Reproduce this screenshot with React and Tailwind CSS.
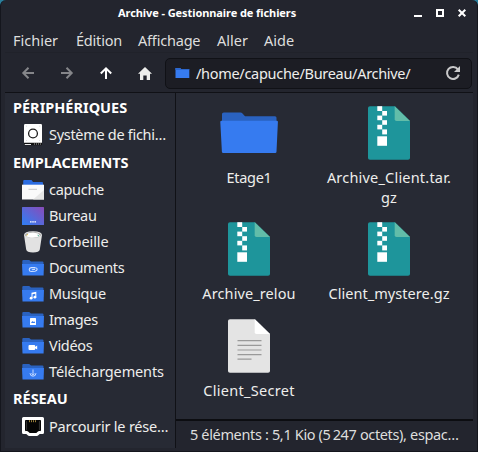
import React from "react";

function Folder({ kind }) {
  return (
    <svg width="22" height="22" viewBox="0 0 22 22" className="shrink-0">
      <path d="M0.3 5V4Q0.3 3 1.3 3H7.2L9 4.6H20.5Q21.5 4.6 21.5 5.6V8H0.3Z" fill="#2a62c0" />
      <path d="M0 7H22L21.6 18.4H0.5Z" fill="#367bf0" />
      {kind === "doc" && (
        <path d="M13 10.6H9.3Q7.2 10.9 7.2 12.8Q7.4 14.5 9.3 14.5L13 14.2Q15.2 13.7 15.2 12Q15 10.7 13 10.7M13 12.4L9.8 12.8" stroke="#cfe0ff" fill="none" strokeWidth="1.1" />
      )}
      {kind === "music" && (
        <g fill="#fff">
          <path d="M9.5 9.7L14.3 8.8V14H13.3V10.8L10.5 11.3V15.2H9.5Z" />
          <circle cx="9.1" cy="15.2" r="1.4" />
          <circle cx="12.9" cy="14.2" r="1.4" />
        </g>
      )}
      {kind === "image" && (
        <g>
          <rect x="8" y="9" width="6" height="7" rx="0.6" fill="#fff" />
          <path d="M9 14L10.4 12L11.3 13L12.2 12.3L13.2 14Z" fill="#367bf0" />
        </g>
      )}
      {kind === "video" && (
        <g fill="#fff">
          <rect x="6.5" y="10" width="6.7" height="5" rx="1" />
          <path d="M13 12L15.2 10.6V14.5L13 13.2Z" />
        </g>
      )}
      {kind === "down" && (
        <path d="M11 8.5V14M9.3 12.5L11 14.2L12.7 12.5M8 12.2Q8.2 15.2 11 15.2Q13.8 15.2 14 12.2" stroke="#c3d9ff" fill="none" strokeWidth="1" />
      )}
    </svg>
  );
}

function Disk() {
  return (
    <svg width="22" height="22" viewBox="0 0 22 22" className="shrink-0">
      <rect x="2" y="0" width="18" height="19.5" rx="1.2" fill="#fff" />
      <path d="M2 18.7H20V20.5Q20 21.3 19 21.3H3Q2 21.3 2 20.5Z" fill="#111" />
      <path d="M2.5 20H9V21H3Z" fill="#e8e8e8" />
      <path d="M12 20H13M14 20H15M16 20H17M18 20H19" stroke="#aaa" />
      <circle cx="11" cy="9.5" r="4.4" fill="#fff" stroke="#1c1c1c" strokeWidth="1.3" />
      <path d="M4 2.2h.8M17.3 2.2h.8M4 16.5h.8M17.3 16.5h.8" stroke="#ccc" strokeWidth="0.8" />
    </svg>
  );
}

function HomeFolder() {
  return (
    <svg width="22" height="22" viewBox="0 0 22 22" className="shrink-0">
      <path d="M1.2 6V2Q1.2 1 2.2 1H9.5L11 3H20Q21 3 21 4V6Z" fill="#2b6ce0" />
      <path d="M0 5.7H22V20.5H0Z" fill="#fafafa" />
      <path d="M22 11V20.5H11Z" fill="#e6e6e6" />
      <path d="M6.5 10.3H15" stroke="#c8c8c8" strokeWidth="1" />
    </svg>
  );
}

function Desktop() {
  return (
    <svg width="22" height="22" viewBox="0 0 22 22" className="shrink-0">
      <defs>
        <linearGradient id="desk" x1="0" y1="1" x2="1" y2="0">
          <stop offset="0.1" stopColor="#367bf0" />
          <stop offset="1" stopColor="#8a4bb8" />
        </linearGradient>
      </defs>
      <rect x="0" y="2" width="22" height="18" rx="0.5" fill="url(#desk)" />
      <path d="M8 16.8h1.6M10.2 16.8h1.6M12.4 16.8h1.6" stroke="#fff" strokeWidth="1.3" />
    </svg>
  );
}

function Trash() {
  return (
    <svg width="22" height="22" viewBox="0 0 22 22" className="shrink-0">
      <path d="M2 4Q2 0.2 11 0.2Q20 0.2 20 4L17.8 18.6Q17.4 21.6 11 21.6Q4.6 21.6 4.2 18.6Z" fill="#e2e2e2" />
      <ellipse cx="11" cy="4" rx="8" ry="2.9" fill="#aaa" />
      <path d="M4 5L6 2.3L11 1.5L16 2.5L18.2 5Q15 6.8 11 6.8Q6 6.8 4 5Z" fill="#fff" />
      <path d="M4.5 4.5L6 3.2" stroke="#e5c449" strokeWidth="1" />
      <path d="M15.6 4.2L17 5" stroke="#47ad91" strokeWidth="1" />
    </svg>
  );
}

function Ethernet() {
  return (
    <svg width="22" height="22" viewBox="0 0 22 22" className="shrink-0">
      <path d="M1.5 2.5H20.5V16.6H17L15 18.4H7L5 16.6H1.5Z" fill="#050505" stroke="#fff" strokeWidth="3" strokeLinejoin="round" />
      <path d="M3 4L4.6 5.7V13.6L3 15.1M19 4L17.4 5.7V13.6L19 15.1" stroke="#555" strokeWidth="0.6" fill="none" />
      <path d="M7.5 4.2V6.2M9.5 4.2V6.2M11.5 4.2V6.2M13.5 4.2V6.2" stroke="#a98b3f" strokeWidth="0.9" />
    </svg>
  );
}

function BigFolder() {
  return (
    <svg width="58" height="54" viewBox="0 0 58 54">
      <path d="M2 15V8Q2 6.5 3.8 6.5H20.5Q21.7 6.5 22.5 7.5L25 10.3H55Q56.5 10.3 56.5 11.8V18H2Z" fill="#2a62c0" />
      <path d="M0.3 16Q0.3 14.8 1.5 14.8H56.8Q58 14.8 57.9 16L56.5 45.8Q56.4 47 55.2 47H3.2Q2 47 1.9 45.8Z" fill="#367bf0" />
    </svg>
  );
}

function Archive() {
  return (
    <svg width="42" height="54" viewBox="0 0 42 54">
      <path d="M2 0.2H27L42 15V52Q42 53.8 40 53.8H2Q0 53.8 0 52V2Q0 0.2 2 0.2Z" fill="#1e959b" />
      <path d="M26.7 0.2L42 15H28.5Q26.7 15 26.7 13.2Z" fill="#62bda9" />
      <g fill="#fff">
        <rect x="9.3" y="0.2" width="4.9" height="4.8" />
        <rect x="14.2" y="5" width="4.8" height="4.6" />
        <rect x="9.3" y="9.6" width="4.9" height="4.6" />
        <rect x="14.2" y="14.2" width="4.8" height="4.6" />
        <rect x="9.3" y="18.8" width="4.9" height="4.6" />
        <rect x="14.2" y="23.4" width="4.8" height="5" />
        <rect x="9.3" y="30.3" width="9.7" height="9.5" />
      </g>
    </svg>
  );
}

function TextFile() {
  return (
    <svg width="42" height="54" viewBox="0 0 42 54">
      <path d="M2 0.2H27L42 15V52Q42 53.8 40 53.8H2Q0 53.8 0 52V2Q0 0.2 2 0.2Z" fill="#e4e4e4" />
      <path d="M26.7 0.2L42 15H28.5Q26.7 15 26.7 13.2Z" fill="#fff" />
      <path d="M9.5 21.6H33.5M9.5 26.3H33.5M9.5 31H33.5M9.5 35.6H33.5M9.5 40.2H23.5" stroke="#999" strokeWidth="1.2" />
    </svg>
  );
}

function Heading({ children, className = "h-[27px]" }) {
  return <div className={className + " flex items-center pl-2 text-[14.5px] font-bold text-white"}>{children}</div>;
}

function Place({ icon, children, className = "h-[26px] tracking-[-0.3px]" }) {
  return (
    <div className={className + " flex items-center gap-[5px] pl-[17px]"}>
      {icon}
      <span>{children}</span>
    </div>
  );
}

function Item({ icon, children, className = "" }) {
  return (
    <div className={className + " flex w-[140px] flex-col items-center"}>
      <div className="flex h-[54px] items-center">{icon}</div>
      <div className="mt-[7px] text-center leading-[20px]">{children}</div>
    </div>
  );
}

export default function App() {
  return (
    <div className="h-[452px] w-[478px] overflow-hidden bg-[#2a7f9c]">
      <div className="flex h-[452px] w-[478px] flex-col rounded-t-[6px] border-x border-b border-[#14161d] bg-[#23252e] px-[4px] pb-[3px] font-['Noto_Sans',sans-serif] text-[14.5px] whitespace-nowrap text-[#eeeeec]">
        <div className="flex h-[27px] items-center">
          <div className="ml-[113px] w-[290px] pb-[2px] text-[11px] leading-[24px] font-bold tracking-[-0.08px] text-white">Archive - Gestionnaire de fichiers</div>
          <svg width="54" height="12" viewBox="0 0 54 12" className="ml-[5px] mb-px">
            <path d="M1 9H9" stroke="#fff" strokeWidth="2" />
            <rect x="24" y="3" width="6" height="6" fill="none" stroke="#fff" strokeWidth="2" />
            <path d="M45.7 2.7L52.3 9.3M52.3 2.7L45.7 9.3" stroke="#fff" strokeWidth="2" />
          </svg>
        </div>
        <div className="flex h-[26px] items-center border-b border-[#20222a] pt-[3px] pl-2 text-[#dededd]">
          <span className="w-[63px]">Fichier</span>
          <span className="w-[62px] tracking-[-0.2px]">Édition</span>
          <span className="w-[79px] tracking-[-0.2px]">Affichage</span>
          <span className="w-[47px]">Aller</span>
          <span>Aide</span>
        </div>
        <div className="flex h-[39px] items-center">
          <svg width="160" height="30" viewBox="0 0 160 30" fill="none" className="shrink-0">
            <path d="M29 15H18.5M23.5 9.8L18.3 15L23.5 20.2" stroke="#85868a" strokeWidth="2" />
            <path d="M56 15H66.5M61.5 9.8L66.7 15L61.5 20.2" stroke="#85868a" strokeWidth="2" />
            <path d="M101 21V10.5M95.8 15.5L101 10.3L106.2 15.5" stroke="#fff" strokeWidth="2" />
            <path d="M140 9L147 15.8H145V22H141.7V17.5H138.3V22H135V15.8H133Z" fill="#eeeeec" />
          </svg>
          <div className="mt-px flex h-[31px] w-[307px] items-center rounded-[5px] border border-[#101116] bg-[#1c1d24] pr-[10px] pl-[9px]">
            <svg width="15" height="12" viewBox="0 0 15 12" className="shrink-0">
              <path d="M0.5 1H5L6.5 2.2H14.3V11H0.5Z" fill="#367bf0" />
              <path d="M0.5 1H5L6.5 2.2H14.3V3H0.5Z" fill="#2c68cf" />
            </svg>
            <span className="ml-[6px] flex-1 pt-px tracking-[-0.3px]">/home/capuche/Bureau/Archive/</span>
            <svg width="16" height="16" viewBox="0 0 16 16" fill="none" className="shrink-0">
              <path d="M12.9 4.4A6 6 0 1 0 13.8 9.6" stroke="#c9c9ca" strokeWidth="2" />
              <path d="M15 1V7H9Z" fill="#c9c9ca" />
            </svg>
          </div>
        </div>
        <div className="flex min-h-0 flex-1 border-t border-[#101116]">
          <div className="w-[171px] shrink-0 overflow-hidden border-r border-[#101116] bg-[#272a34] pt-px">
            <Heading>PÉRIPHÉRIQUES</Heading>
            <Place className="h-[28px] tracking-[-0.3px]" icon={<Disk />}>Système de fichi…</Place>
            <Heading className="h-[28px] tracking-[-0.05px]">EMPLACEMENTS</Heading>
            <Place icon={<HomeFolder />}>capuche</Place>
            <Place icon={<Desktop />}>Bureau</Place>
            <Place className="h-[26px] tracking-[-0.1px]" icon={<Trash />}>Corbeille</Place>
            <Place icon={<Folder kind="doc" />}>Documents</Place>
            <Place icon={<Folder kind="music" />}>Musique</Place>
            <Place icon={<Folder kind="image" />}>Images</Place>
            <Place icon={<Folder kind="video" />}>Vidéos</Place>
            <Place className="h-[26px] tracking-[-0.15px]" icon={<Folder kind="down" />}>Téléchargements</Place>
            <Heading className="h-[28px]">RÉSEAU</Heading>
            <Place className="h-[28px] tracking-[-0.2px]" icon={<Ethernet />}>Parcourir le rése…</Place>
          </div>
          <div className="flex min-w-0 flex-1 flex-col">
            <div className="grid h-[326px] grid-cols-[140px_140px] grid-rows-[116px_97px_90px] bg-[#272a34] pt-[13px] pl-[3px]">
              <Item className="tracking-[-0.3px]" icon={<BigFolder />}>Etage1</Item>
              <Item className="tracking-[0.2px]" icon={<Archive />}>Archive_Client.tar.<br />gz</Item>
              <Item className="tracking-[0.1px]" icon={<Archive />}>Archive_relou</Item>
              <Item className="tracking-[0.05px]" icon={<Archive />}>Client_mystere.gz</Item>
              <Item className="tracking-[0.3px]" icon={<TextFile />}>Client_Secret</Item>
            </div>
            <div className="flex flex-1 items-center border-t-2 border-[#0c0d11] pl-[14px] tracking-[-0.35px] text-[#dededd]">5 éléments : 5,1 Kio (5{"\u202f"}247 octets), espac…</div>
          </div>
        </div>
      </div>
    </div>
  );
}
